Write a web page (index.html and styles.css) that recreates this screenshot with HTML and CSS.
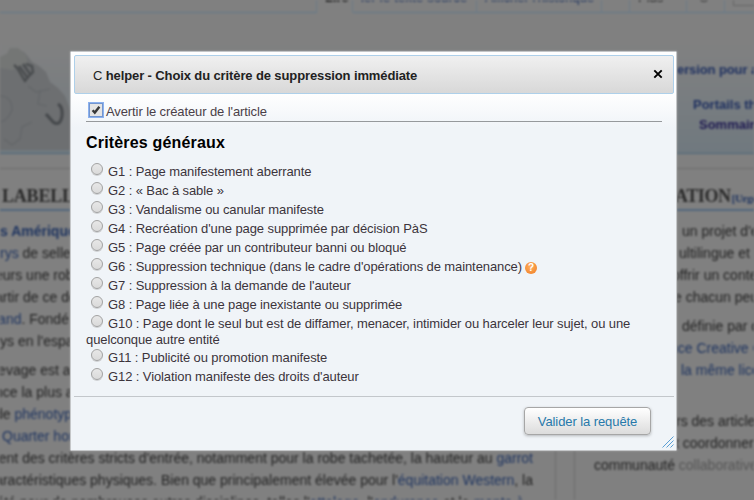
FILE: index.html
```
<!DOCTYPE html>
<html lang="fr">
<head>
<meta charset="utf-8">
<title>C helper</title>
<link rel="stylesheet" href="styles.css">
</head>
<body>
<div class="page">
  <div class="tabs">
    <span class="gap"></span>
    <b class="tab lire">Lire</b>
    <span class="tab source">ier le texte source</span>
    <span class="tab hist">Afficher l'historique</span>
    <span class="tab star"></span>
    <span class="tab plus">Plus</span>
    <span class="tab c">C</span>
    <span class="tab search"><i></i></span>
  </div>
  <div class="banner">
    <svg class="globe" width="72" height="122" viewBox="0 0 72 122">
      <path d="M0 34 L7 27 L9 22 L16 20 L25 25 L32 34 L39 38 L46 44 L50 54 L58 60 L65 68 L72 86 V122 H0Z" fill="#6d6f71"/>
      <path d="M0 29 L8 25 L10 20 L18 20 L26 27 L28 34 L12 42 L0 40Z" fill="#747675"/>
      <path d="M14 37 C19 40 20 46 25 53 L28 49 L33 44 L32 38 L26 36 M19 38 L27 49 M23 36 L30 46" fill="none" stroke="#484b4d" stroke-width="2.2"/>
      <path d="M58 76 Q63 79 62 88 Q60 99 53 94 L46 86" fill="none" stroke="#45484b" stroke-width="3"/>
      <path d="M0 68 Q12 68 12 82 Q8 92 1 94 M4 111 l8 6 l8 -6 l2 -12 l10 -5 M40 62 l-2 14 l9 2 M28 58 l8 6 l14 -3" fill="none" stroke="#636669" stroke-width="1.2"/>
    </svg>
    <div class="links"><p class="l1">ersion pour appareil</p><p class="l2">Portails thématiques</p><p class="l3">Sommaire</p></div>
  </div>
  <div class="columns">
    <div class="left">
      <h2>LABELLE</h2>
      <div class="par">
        <p><a><b>s Amérique</b></a></p>
        <p><a>rys</a> de selle</p>
        <p class="in">eurs une robe</p>
        <p class="in">artir de ce de</p>
        <p class="in"><a>land</a>. Fondé</p>
        <p>ys en l'espac</p>
      </div>
      <div class="par">
        <p class="in">levage est a</p>
        <p class="in">nce la plus a</p>
        <p class="in">de <a>phénotyp</a></p>
        <p class="q"><a>Quarter hor</a></p>
        <p class="full">gent des critères stricts d'entrée, notamment pour la robe tachetée, la hauteur au <a>garrot</a></p>
        <p class="full">caractéristiques physiques. Bien que principalement élevée pour l'<a>équitation Western</a>, la</p>
        <p class="full f3">été pour de nombreuses autres disciplines, telles l'<a>attelage</a>, l'<a>endurance</a> et la <a>monte à</a></p>
      </div>
    </div>
    <div class="right">
      <h2>ATION <small>[Urgent]</small></h2>
      <div class="par">
        <p class="r1">un projet d'encyclopédie</p>
        <p class="r2">ultilingue et universelle</p>
        <p class="r3">offrir un contenu</p>
        <p class="r4">e chacun peut</p>
      </div>
      <div class="par">
        <p class="r5">définie par des</p>
        <p class="r6"><a>nce Creative Commons</a></p>
        <p class="r7"><a>la même licence</a></p>
      </div>
      <div class="par last">
        <p class="r8">rs des articles</p>
        <p class="r9">t coordonner</p>
        <p class="r10">communauté <span class="soft">collaborative</span></p>
      </div>
    </div>
  </div>
</div>

<div class="dialog">
  <div class="title"><span><span class="thin">C</span> helper - Choix du critère de suppression immédiate</span>
    <svg width="10" height="10" viewBox="0 0 10 10"><path d="M1.3 1.3 L8.7 8.7 M8.7 1.3 L1.3 8.7" stroke="#000" stroke-width="1.9"/></svg>
  </div>
  <div class="body">
    <div class="notify"><span class="check"><svg width="12" height="12" viewBox="0 0 12 12"><path d="M2.6 6.2 L4.8 8.6 L9.4 2.8" fill="none" stroke="#383838" stroke-width="2.4"/></svg></span><span>Avertir le créateur de l'article</span></div>
    <h3>Critères généraux</h3>
    <div class="row"><i class="radio"></i><span>G1 : Page manifestement aberrante</span></div>
    <div class="row"><i class="radio"></i><span>G2 : « Bac à sable »</span></div>
    <div class="row"><i class="radio"></i><span>G3 : Vandalisme ou canular manifeste</span></div>
    <div class="row"><i class="radio"></i><span>G4 : Recréation d'une page supprimée par décision PàS</span></div>
    <div class="row"><i class="radio"></i><span>G5 : Page créée par un contributeur banni ou bloqué</span></div>
    <div class="row"><i class="radio"></i><span>G6 : Suppression technique (dans le cadre d'opérations de maintenance)</span><i class="help">?</i></div>
    <div class="row"><i class="radio"></i><span>G7 : Suppression à la demande de l'auteur</span></div>
    <div class="row"><i class="radio"></i><span>G8 : Page liée à une page inexistante ou supprimée</span></div>
    <div class="row"><i class="radio"></i><span>G10 : Page dont le seul but est de diffamer, menacer, intimider ou harceler leur sujet, ou une</span></div>
    <div class="cont">quelconque autre entité</div>
    <div class="row"><i class="radio"></i><span>G11 : Publicité ou promotion manifeste</span></div>
    <div class="row"><i class="radio"></i><span>G12 : Violation manifeste des droits d'auteur</span></div>
  </div>
  <div class="foot"><button>Valider la requête</button></div>
  <svg class="grip" width="12" height="12" viewBox="0 0 12 12"><path d="M.5 11.5 L11.5 .5 M4.5 11.5 L11.5 4.5 M8.5 11.5 L11.5 8.5" stroke="#5a9fd4" fill="none"/></svg>
</div>
</body>
</html>
```
FILE: styles.css
```
* { box-sizing: border-box; }
body { margin: 0; width: 754px; height: 500px; overflow: hidden; background: #808080; font: 13px "Liberation Sans", Arial, sans-serif; position: relative; }
p, h2, h3 { margin: 0; white-space: nowrap; }
.page { width: 754px; height: 500px; overflow: hidden; color: #222; filter: blur(1px); font-size: 14px; background: #808080; }
.page a { color: #1d335f; }
.tabs { display: flex; height: 13px; overflow: hidden; font-size: 13px; color: #1d335f; }
.tabs > * { border-bottom: 1px solid #617889; border-right: 1px solid #6c7b87; height: 13px; flex: none; }
.gap { width: 317px; }
.tab { text-indent: 8px; line-height: 0; white-space: nowrap; margin-top: -2px; height: 15px !important; }
.lire { width: 36px; border-bottom-color: transparent !important; color: #222; }
.source { width: 124px; letter-spacing: .2px; }
.hist { width: 125px; }
.star { width: 28px; }
.plus { width: 57px; color: #222; }
.c { width: 38px; color: #444; text-indent: 12px; }
.search { width: 40px; }
.search i { display: block; margin-left: 8px; width: 40px; height: 8px; border: 1px solid #666; border-top: 0; }
.banner { height: 141px; display: flex; justify-content: space-between; background: linear-gradient(#808080 20%, #7f8081 30%, #70797f); border-bottom: 1px solid #4f6678; }
.globe { margin-top: 12px; height: 128px; }
.links { width: 77px; margin-top: 48px; color: #1d2f5f; line-height: 18px; overflow: hidden; font-size: 13px; font-weight: bold; }
.links .l1 { height: 35px; letter-spacing: -.1px; }
.links .l2, .links .l3 { padding-left: 16px; height: 20px; }
.links .l3 { padding-left: 22px; color: #1d1850; }
.columns { display: flex; margin-top: 14px; gap: 18px; }
.left { width: 556px; border: 1px solid #6c6c6c; border-left: 0; height: 340px; flex: none; }
.right { width: 190px; border: 1px solid #6c6c6c; height: 340px; flex: none; }
h2 { font: bold 18px/26px "Liberation Serif", serif; height: 42px; padding-top: 14px; border-bottom: 2px solid #52677d; color: #2a2a2a; }
.left h2 { padding-left: 2px; margin-bottom: 9px; letter-spacing: -.2px; }
.right h2 { padding-left: 100px; margin-bottom: 9px; letter-spacing: -.4px; }
h2 small { font-size: 11px; color: #1d335f; margin-left: -3px; }
.par { margin-bottom: 7px; }
.par p { height: 22px; line-height: 22px; }
.in { text-indent: -5px; }
.q { padding-left: 2px; }
.full { width: 533px; display: flex; justify-content: flex-end; white-space: pre; }
.f3 { width: 524px; }
.r1 { padding-left: 107px; } .r2 { padding-left: 104px; } .r3 { padding-left: 97px; } .r4 { padding-left: 99px; }
.r5 { padding-left: 107px; } .r6 { padding-left: 95px; } .r7 { padding-left: 106px; }
.last { margin-top: 29px; }
.r8 { padding-left: 101px; } .r9 { padding-left: 100px; } .r10 { padding-left: 19px; }
.soft { color: #555; }

.dialog { position: absolute; left: 70px; top: 51px; width: 607px; height: 400px; border: 1px solid #c4c6c8; border-radius: 1px; padding: 3px 2px 3px 3px; background: linear-gradient(#fff 0, #fff 10%, #f0f4f8 19%, #f0f4f8); box-shadow: 0 0 2px #b0b0b0; letter-spacing: -.1px; color: #333; display: flex; flex-direction: column; }
.title { height: 39px; border: 1px solid #aed0ea; border-radius: 2px; background: linear-gradient(#f0f0f0, #d8d8d8); display: flex; align-items: center; justify-content: space-between; padding: 2px 10px 0 18px; font-weight: bold; color: #222; white-space: nowrap; letter-spacing: -.115px; flex: none; }
.title svg { margin-top: -4px; }
.thin { font-weight: normal; }
.body { height: 303px; border-bottom: 1px solid #c3c7cb; padding: 7px 12px 0; flex: none; }
.notify { height: 21px; border-bottom: 1px solid #96999c; display: flex; align-items: center; padding-left: 3px; color: #4a3f48; }
.check { width: 14px; height: 14px; background: #e4e4e4; border: 1px solid #7295cf; box-shadow: 0 0 0 1px #8bb1ef; margin: -3px 3px 0 0; }
.check svg { display: block; }
h3 { font-size: 16px; line-height: 20px; color: #000; padding-top: 11px; height: 40px; letter-spacing: .18px; }
.row { height: 19px; line-height: 19px; display: flex; white-space: nowrap; color: #3c343c; }
.radio { width: 12px; height: 12px; border-radius: 50%; border: 1px solid #a2a2a2; background: linear-gradient(#e7e7e7, #dadada); box-shadow: 0 1px 0 #d0d2d4; margin: 1px 5px 0 5px; flex: none; }
.cont { height: 15px; line-height: 13px; color: #3c343c; white-space: nowrap; }
.help { width: 12px; height: 12px; margin: 5px 0 0 3px; border-radius: 50%; background: radial-gradient(circle at 45% 40%, #ffb060, #ef7a20); color: #fff; font: bold 10px/12px "Liberation Sans", sans-serif; text-align: center; }
.foot { display: flex; justify-content: flex-end; padding: 10px 23px 0 0; }
button { width: 127px; height: 28px; border: 1px solid #a6a6a6; border-radius: 4px; background: linear-gradient(#fff, #dcdcdc); box-shadow: 0 1px 3px rgba(0,0,0,.25); color: #2779aa; font: 13px "Liberation Sans", sans-serif; letter-spacing: -.08px; padding: 1px 0 0; white-space: nowrap; }
.grip { position: absolute; right: 2px; bottom: 2px; }
```
